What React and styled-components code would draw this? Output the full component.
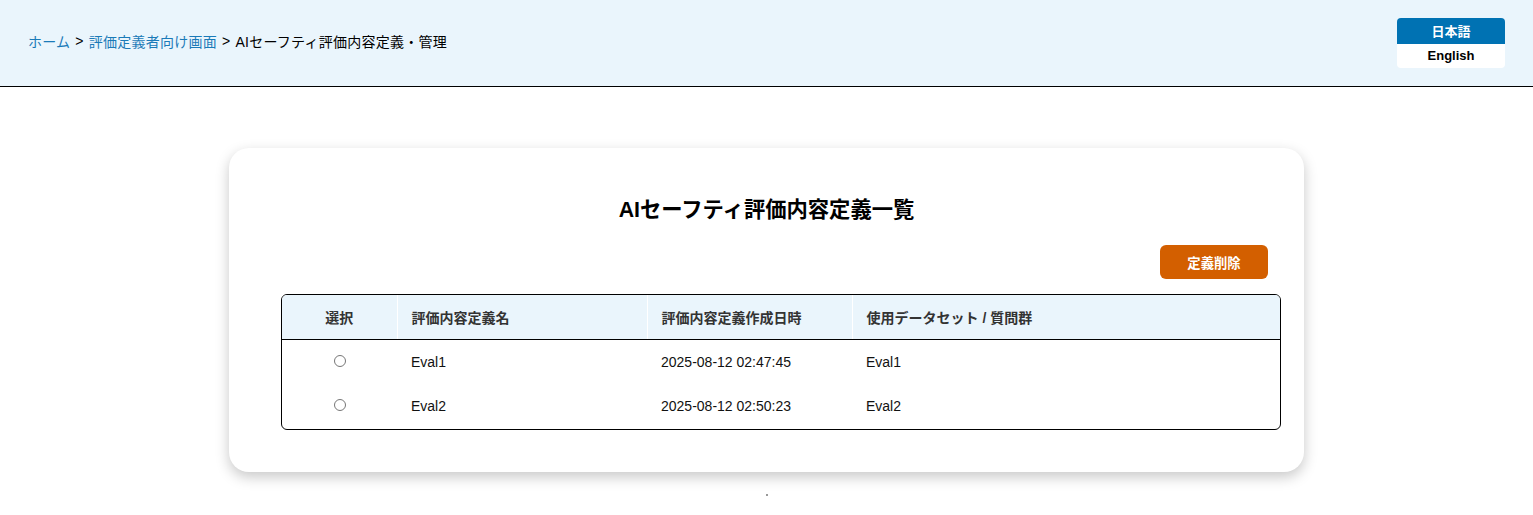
import React from "react";
import styled, { createGlobalStyle } from "styled-components";

const Global = createGlobalStyle`
  html, body { margin: 0; padding: 0; background: #ffffff; }
  body { font-family: "Liberation Sans", "Noto Sans CJK JP", sans-serif; color: #000; }
`;

const Header = styled.header`
  height: 86px;
  background: #eaf5fc;
  border-bottom: 1px solid #000;
  display: flex;
  align-items: center;
  justify-content: space-between;
  padding: 0 28px;
`;

const Crumbs = styled.nav`
  font-size: 14px;
  letter-spacing: 0.25px;
  display: flex;
  align-items: center;
  gap: 5px;
  margin-top: -4px;
`;

const Crumb = styled.a`
  color: ${(p) => (p.$link ? "#1a7ab8" : "#000")};
  text-decoration: none;
`;

const Lang = styled.div`
  display: flex;
  flex-direction: column;
  width: 108px;
  border-radius: 4px;
  overflow: hidden;
  margin-top: -1px;
`;

const LangBtn = styled.button`
  border: none;
  height: ${(p) => (p.$active ? 26 : 24)}px;
  background: ${(p) => (p.$active ? "#0072b3" : "#ffffff")};
  color: ${(p) => (p.$active ? "#fff" : "#000")};
  font-family: inherit;
  font-weight: 700;
  font-size: 13px;
  padding: 0;
`;

const Main = styled.main`
  display: flex;
  flex-direction: column;
  align-items: center;
  padding-top: 61px;
`;

const Card = styled.section`
  width: 1075px;
  box-sizing: border-box;
  background: #fff;
  border-radius: 20px;
  box-shadow: 0 5px 14px rgba(0, 0, 0, 0.22);
  padding: 48px 23px 42px 52px;
  display: flex;
  flex-direction: column;
`;

const Title = styled.h1`
  margin: 0;
  font-size: 21.3px;
  line-height: 28px;
  font-weight: 700;
  text-align: center;
  padding-right: 29px;
`;

const Actions = styled.div`
  display: flex;
  justify-content: flex-end;
  width: 1000px;
  padding-right: 13px;
  box-sizing: border-box;
  margin-top: 21px;
  margin-bottom: 15px;
`;

const DangerBtn = styled.button`
  width: 108px;
  height: 34px;
  border: none;
  border-radius: 6px;
  background: #d35f00;
  color: #fff;
  font-family: inherit;
  font-weight: 700;
  font-size: 13.33px;
`;

const TableWrap = styled.div`
  width: 1000px;
  border: 1px solid #000;
  border-radius: 6px;
  overflow: hidden;
  box-sizing: border-box;
`;

const Table = styled.table`
  width: 100%;
  border-collapse: collapse;
  font-size: 14px;
`;

const Th = styled.th`
  background: #eaf5fc;
  height: 44px;
  padding: 0 14px;
  font-weight: 700;
  color: #333;
  text-align: ${(p) => (p.$center ? "center" : "left")};
  border-bottom: 1px solid #000;
  border-left: ${(p) => (p.$first ? "none" : "1px solid #fff")};
  width: ${(p) => p.$w || "auto"};
  box-sizing: border-box;
`;

const Td = styled.td`
  height: 44px;
  padding: 0 14px;
  text-align: ${(p) => (p.$center ? "center" : "left")};
  color: #111;
`;

const LastRow = styled.tr`
  &:last-child td {
    padding-bottom: 1px;
  }
`;

const Radio = styled.input`
  width: 12px;
  height: 12px;
  margin: 0;
  vertical-align: middle;
  position: relative;
  top: -2px;
  accent-color: #888;
`;

const Dot = styled.div`
  width: 2px;
  height: 2px;
  background: #999;
  margin-top: 22px;
`;

const rows = [
  { name: "Eval1", date: "2025-08-12 02:47:45", ds: "Eval1" },
  { name: "Eval2", date: "2025-08-12 02:50:23", ds: "Eval2" },
];

export default function App() {
  return (
    <>
      <Global />
      <Header>
        <Crumbs>
          <Crumb $link href="#">ホーム</Crumb>
          <span>&gt;</span>
          <Crumb $link href="#">評価定義者向け画面</Crumb>
          <span>&gt;</span>
          <Crumb>AIセーフティ評価内容定義・管理</Crumb>
        </Crumbs>
        <Lang>
          <LangBtn $active>日本語</LangBtn>
          <LangBtn>English</LangBtn>
        </Lang>
      </Header>
      <Main>
        <Card>
          <Title>AIセーフティ評価内容定義一覧</Title>
          <Actions>
            <DangerBtn>定義削除</DangerBtn>
          </Actions>
          <TableWrap>
            <Table>
              <thead>
                <tr>
                  <Th $first $center $w="115px">選択</Th>
                  <Th $w="250px">評価内容定義名</Th>
                  <Th $w="205px">評価内容定義作成日時</Th>
                  <Th>使用データセット / 質問群</Th>
                </tr>
              </thead>
              <tbody>
                {rows.map((r) => (
                  <LastRow key={r.name}>
                    <Td $center>
                      <Radio type="radio" name="sel" />
                    </Td>
                    <Td>{r.name}</Td>
                    <Td>{r.date}</Td>
                    <Td>{r.ds}</Td>
                  </LastRow>
                ))}
              </tbody>
            </Table>
          </TableWrap>
        </Card>
        <Dot />
      </Main>
    </>
  );
}
